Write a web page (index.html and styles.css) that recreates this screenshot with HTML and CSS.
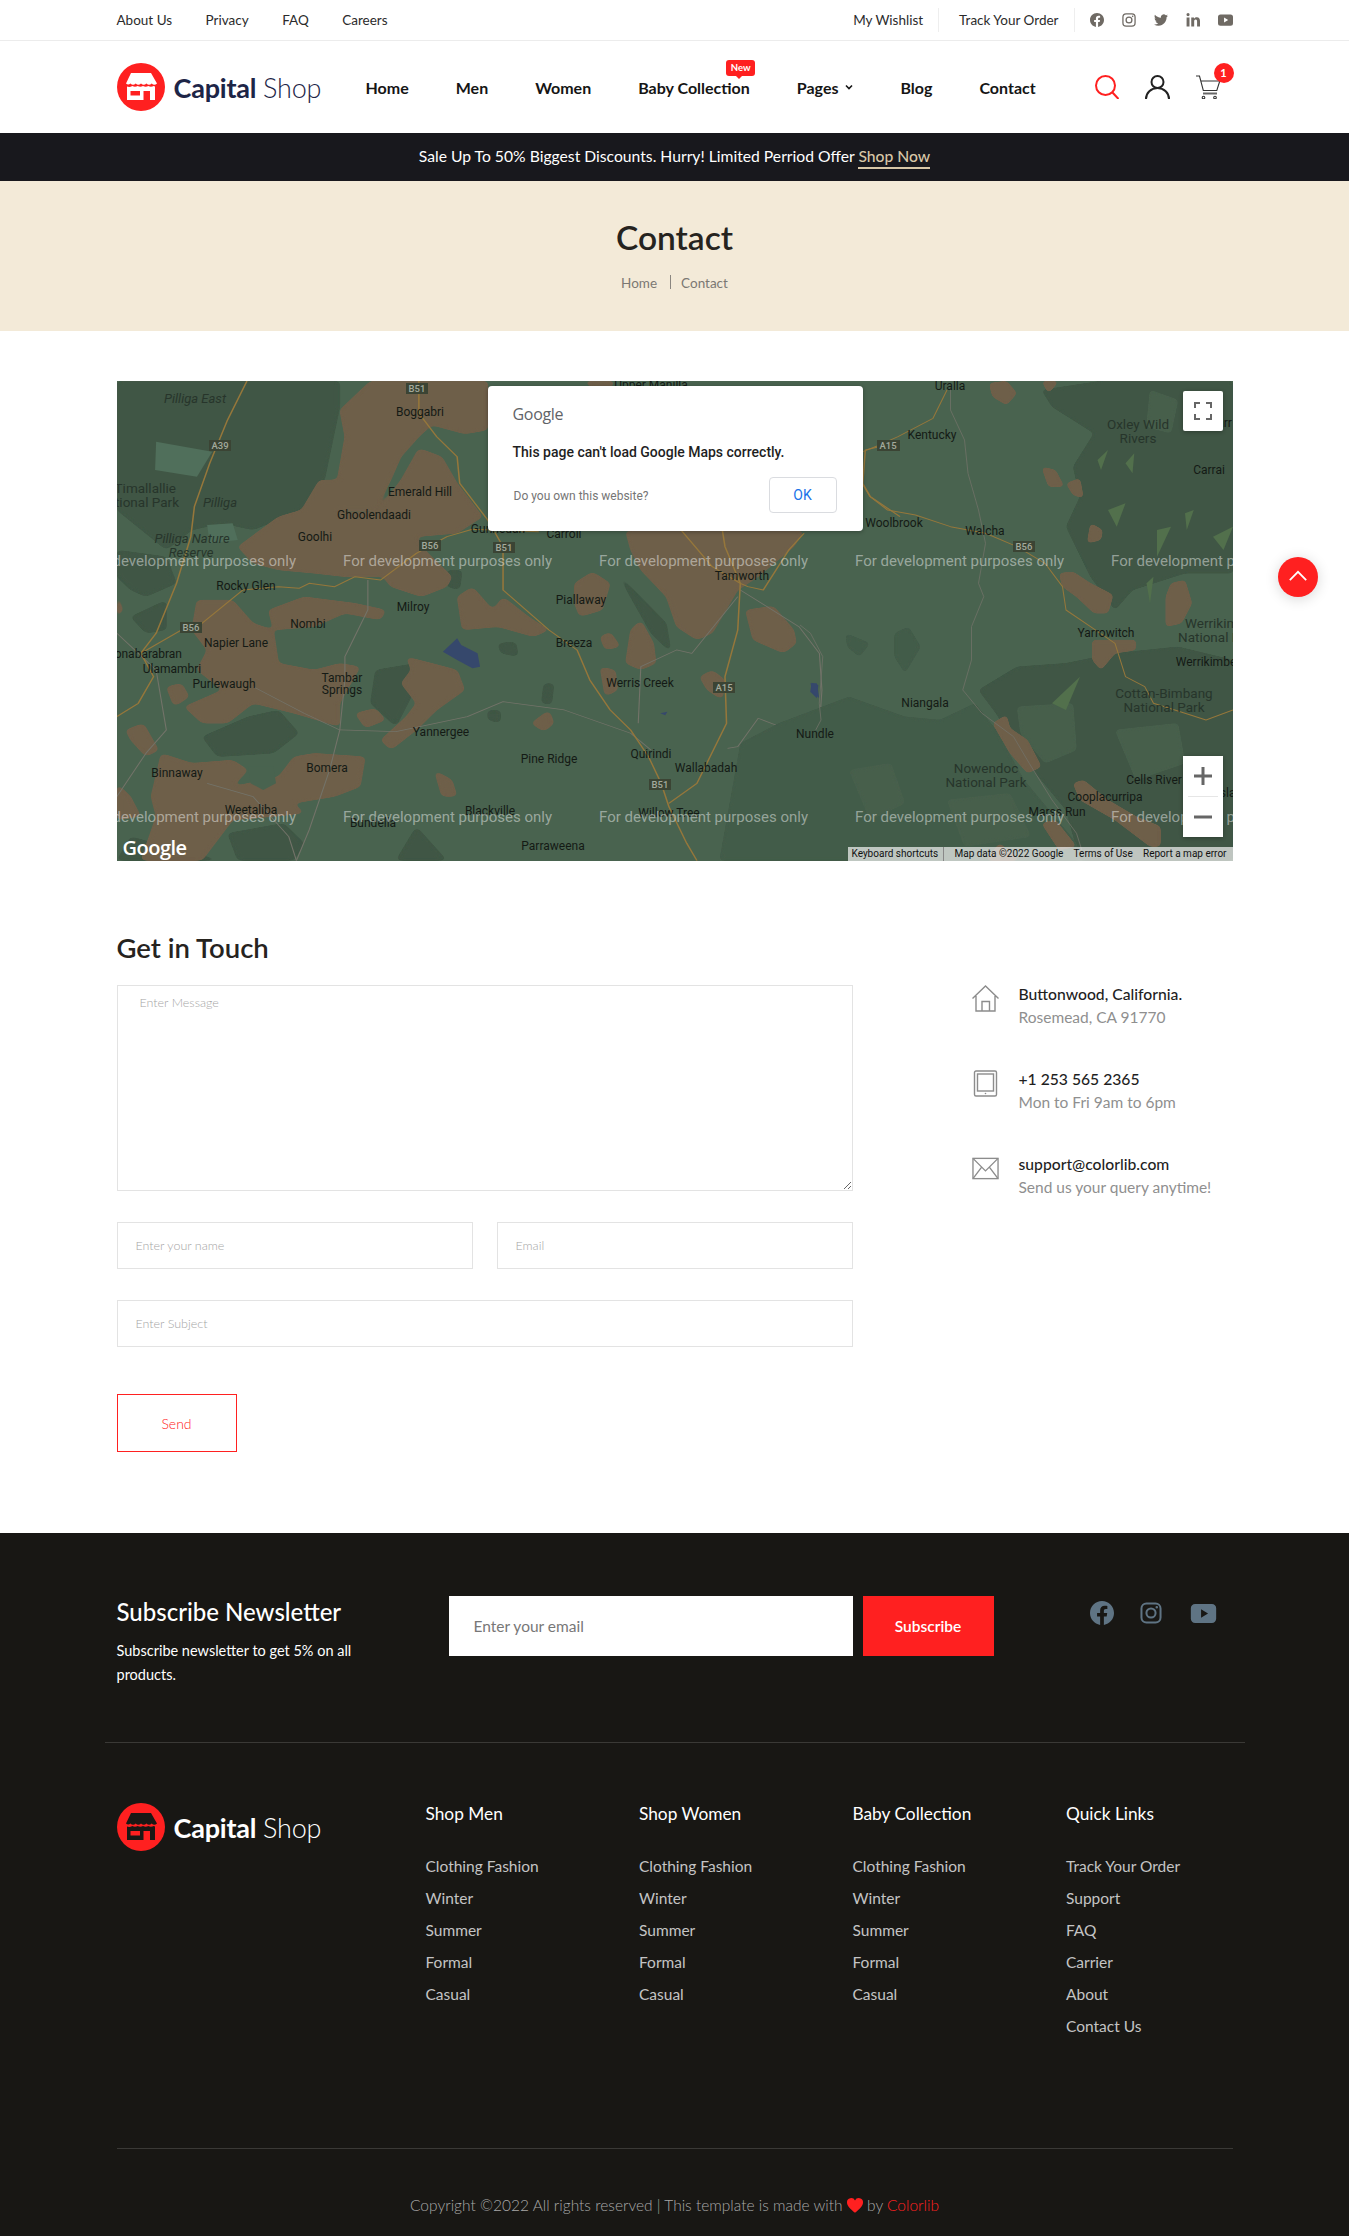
FILE: index.html
```html
<!DOCTYPE html>
<html lang="en">
<head>
<meta charset="utf-8">
<title>Contact - Capital Shop</title>
<link rel="stylesheet" href="styles.css">
</head>
<body>
<svg class="defs" width="0" height="0" aria-hidden="true">
  <symbol id="store" viewBox="0 0 48 48">
    <path class="store-disc" d="M24 0a24 24 0 1 1 0 48a24 24 0 1 1 0-48z"/>
    <path class="store-fg" d="M14 10h20l6 10.500q-2.700 2.500-5.300 0q-2.700 2.500-5.300 0q-2.700 2.500-5.400 0q-2.700 2.500-5.300 0q-2.700 2.500-5.300 0q-2.200 2-4.400 0z"/>
    <path class="store-fg" fill-rule="evenodd" d="M10 23.500q2.700 1 5.300-.5q2.700 1.500 5.400 0q2.600 1.500 5.300 0q2.700 1.500 5.300 0q2.700 1.500 5.400 0q.6.300 1.300.5V37H10zM13.500 28v4.500h9.500V28zM26.500 28v9H33v-9z"/>
  </symbol>
  <symbol id="fb" viewBox="0 0 24 24"><path d="M24 12.073c0-6.627-5.373-12-12-12s-12 5.373-12 12c0 5.990 4.388 10.954 10.125 11.854v-8.385H7.078v-3.470h3.047V9.430c0-3.007 1.792-4.669 4.533-4.669 1.312 0 2.686.235 2.686.235v2.953H15.830c-1.491 0-1.956.925-1.956 1.874v2.250h3.328l-.532 3.470h-2.796v8.385C19.612 23.027 24 18.062 24 12.073z"/></symbol>
  <symbol id="ig" viewBox="0 0 24 24"><path fill-rule="evenodd" d="M7 .5h10A6.500 6.500 0 0 1 23.500 7v10a6.500 6.500 0 0 1-6.500 6.500H7A6.500 6.500 0 0 1 .5 17V7A6.500 6.500 0 0 1 7 .5zm0 2.200A4.300 4.300 0 0 0 2.700 7v10A4.300 4.300 0 0 0 7 21.300h10a4.300 4.300 0 0 0 4.300-4.300V7A4.300 4.300 0 0 0 17 2.700zm5 3.200a6.100 6.100 0 1 1 0 12.200a6.100 6.100 0 0 1 0-12.200zm0 2.200a3.900 3.900 0 1 0 0 7.800a3.900 3.900 0 0 0 0-7.800zM18.300 4.300a1.400 1.400 0 1 1 0 2.800a1.400 1.400 0 0 1 0-2.800z"/></symbol>
  <symbol id="tw" viewBox="0 0 24 24"><path d="M23.953 4.570a10 10 0 0 1-2.825.775 4.958 4.958 0 0 0 2.163-2.723c-.951.555-2.005.959-3.127 1.184a4.920 4.920 0 0 0-8.384 4.482C7.690 8.095 4.067 6.130 1.640 3.162a4.822 4.822 0 0 0-.666 2.475c0 1.710.870 3.213 2.188 4.096a4.904 4.904 0 0 1-2.228-.616v.060a4.923 4.923 0 0 0 3.946 4.827 4.996 4.996 0 0 1-2.212.085 4.936 4.936 0 0 0 4.604 3.417 9.867 9.867 0 0 1-6.102 2.105c-.390 0-.779-.023-1.170-.067a13.995 13.995 0 0 0 7.557 2.209c9.053 0 13.998-7.496 13.998-13.985 0-.210 0-.420-.015-.630A9.935 9.935 0 0 0 24 4.590z"/></symbol>
  <symbol id="in" viewBox="0 0 24 24"><path d="M3.500 0a2.700 2.700 0 1 1 0 5.400a2.700 2.700 0 0 1 0-5.400zM1 7.500h5V23H1zM9 7.500h4.700v2.200c.8-1.400 2.400-2.600 4.700-2.600 4.500 0 5.600 3 5.600 6.900V23h-5v-8c0-1.900-.1-3.800-2.400-3.800s-2.600 1.800-2.600 3.700V23H9z"/></symbol>
  <symbol id="yt" viewBox="0 0 24 18"><path fill-rule="evenodd" d="M4 0h16a4 4 0 0 1 4 4v10a4 4 0 0 1-4 4H4a4 4 0 0 1-4-4V4a4 4 0 0 1 4-4zm5.700 5v8l6.600-4z"/></symbol>
</svg>

<header>
  <div class="topbar">
    <div class="wrap topbar-in">
      <nav class="top-links">
        <a>About Us</a><a>Privacy</a><a>FAQ</a><a>Careers</a>
      </nav>
      <div class="top-right">
        <a class="top-cell">My Wishlist</a>
        <a class="top-cell top-cell-b">Track Your Order</a>
        <div class="top-social">
          <svg class="si"><use href="#fb"/></svg>
          <svg class="si"><use href="#ig"/></svg>
          <svg class="si"><use href="#tw"/></svg>
          <svg class="si"><use href="#in"/></svg>
          <svg class="si si-yt"><use href="#yt"/></svg>
        </div>
      </div>
    </div>
  </div>
  <div class="wrap mainbar">
    <a class="logo logo-light">
      <svg class="logo-mark"><use href="#store"/></svg>
      <span class="logo-text"><b>Capital</b> <span>Shop</span></span>
    </a>
    <nav class="mainnav">
      <a>Home</a><a>Men</a><a>Women</a>
      <a class="has-badge">Baby Collection<span class="badge-new">New</span></a>
      <a class="pages">Pages
        <svg class="chev" viewBox="0 0 8 6"><path d="M1 1.500 4 4.500 7 1.500"/></svg>
      </a>
      <a>Blog</a><a>Contact</a>
    </nav>
    <div class="actions">
      <svg class="act act-search" viewBox="0 0 24 24"><circle cx="10.500" cy="10.500" r="9.500"/><path d="M17.500 17.500 23.500 24"/></svg>
      <svg class="act act-user" viewBox="0 0 25 24"><circle cx="12.500" cy="7" r="6"/><path d="M1 24c0-6 5-11 11.500-11S24 18 24 24"/></svg>
      <span class="cart">
        <svg class="act act-cart" viewBox="0 0 24 24"><path d="M0 1h3.500l3.800 14.500h13.500l3-9.500H5"/><path class="thick" d="M7 18.500h14"/><circle cx="7.500" cy="22.500" r="1.300"/><circle cx="19" cy="22.500" r="1.300"/></svg>
        <span class="cart-count">1</span>
      </span>
    </div>
  </div>
</header>

<div class="promo">Sale Up To 50% Biggest Discounts. Hurry! Limited Perriod Offer <a>Shop Now</a></div>

<section class="hero">
  <h1>Contact</h1>
  <div class="crumbs"><a>Home</a><i></i><a>Contact</a></div>
</section>

<main class="wrap">
  <section class="map">
    <svg class="map-art" viewBox="117 381 1116 480" width="1116" height="480">
      <defs>
        <filter id="soft" x="-3%" y="-3%" width="106%" height="106%">
          <feGaussianBlur stdDeviation="6"/>
          <feComponentTransfer><feFuncA type="linear" slope="10" intercept="-4"/></feComponentTransfer>
        </filter>
      </defs>
      <rect x="117" y="381" width="1116" height="480" class="m-base"/>

      <g transform="translate(100 370) scale(.5102 .3333)">
        <g class="m-forest" filter="url(#soft)">
          <polygon points="33,33 288,33 470,33 470,110 440,330 395,420 300,480 240,460 180,480 130,540 33,420"/>
          <polygon points="33,540 130,560 150,640 90,680 60,660 33,620"/>
          <polygon points="60,740 130,690 130,780 90,790"/>
          <polygon points="540,900 620,880 620,950 580,1070 530,1000"/>
          <polygon points="200,1100 290,1040 350,1020 390,1090 340,1150 230,1160"/>
          <polygon points="33,1472 60,1400 130,1430 240,1472"/>
          <polygon points="250,1390 360,1360 400,1420 380,1472 270,1472"/>
          <polygon points="580,1472 620,1370 680,1472"/>
          <polygon points="390,430 440,410 465,335 470,440 420,470 395,470"/>
          <polygon points="780,820 815,815 820,860 785,850"/>
          <polygon points="870,940 890,940 885,1005 865,1000"/>
          <polygon points="680,600 710,600 705,660 680,650"/>
          <polygon points="1010,600 1040,650 1110,760 1120,850 1080,790"/>
          <polygon points="360,925 395,930 395,955 362,950"/>
          <polygon points="760,1020 785,1020 785,1060 760,1050"/>
        </g>
        <polygon class="m-light" points="110,215 220,245 190,320 108,300"/>
        <polygon class="m-light" points="210,465 260,460 270,510 215,520"/>
        <g class="m-brown" filter="url(#soft)">
          <polygon points="470,120 530,33 760,33 760,180 715,192 650,165 625,200 590,260 570,330 540,420 470,420 465,330 480,200"/>
          <polygon points="590,330 625,235 670,260 700,340 750,440 700,490 620,500 640,545 690,620 680,650 630,680 570,650 555,620 480,620 420,610 350,600 300,580 270,530 350,440 395,420 430,330 470,330 470,430 540,430"/>
          <polygon points="190,690 260,690 300,760 340,780 350,880 420,900 470,880 510,890 470,1000 470,1070 380,1030 300,1000 250,1060 200,1060 165,1010 240,960 190,900 210,840 180,780"/>
          <polygon points="330,720 400,680 500,700 560,720 550,750 480,730 420,770 340,780"/>
          <polygon points="700,680 730,650 770,720 790,680 840,740 880,780 850,800 780,770 710,780"/>
          <polygon points="600,860 650,880 700,900 715,960 660,1020 620,1080 570,1140 550,1110 600,1040 620,1000 590,940 610,900"/>
          <polygon points="500,1030 540,1015 560,1050 520,1075"/>
          <polygon points="845,1060 880,1020 890,1060 870,1085"/>
          <polygon points="930,640 965,605 1000,640 985,720 940,740 930,700"/>
          <polygon points="1040,780 1060,750 1085,820 1090,880 1060,900 1030,880"/>
          <polygon points="980,800 1000,785 1020,830 990,840"/>
          <polygon points="980,890 1010,900 1015,960 990,980"/>
          <polygon points="1175,920 1200,900 1225,930 1220,990 1190,960"/>
          <polygon points="1265,720 1320,708 1360,780 1365,820 1340,850 1280,810"/>
          <polygon points="1030,482 1380,482 1360,530 1290,620 1250,660 1200,790 1170,810 1130,770 1110,680 1060,600 1040,540"/>
          <polygon points="950,33 1010,33 1000,55 960,50"/>
          <polygon points="130,950 160,940 175,980 145,1010"/>
          <polygon points="120,1150 180,1180 260,1170 290,1200 260,1250 350,1220 380,1160 420,1150 520,1160 510,1250 460,1280 380,1300 400,1330 340,1340 260,1350 200,1472 80,1472 110,1340 100,1280"/>
          <polygon points="50,1080 85,1060 115,1140 90,1160 60,1110"/>
          <polygon points="33,1240 60,1280 80,1340 33,1350"/>
          <polygon points="655,1200 690,1230 700,1280 670,1280"/>
          <polygon points="33,650 45,720 33,750"/>
        </g>
        <polygon class="m-base" points="290,1190 340,1190 345,1240 320,1260 295,1240"/>
        <g class="m-water">
          <polygon points="700,805 708,825 740,850 745,890 730,895 700,870 672,845"/>
          <polygon points="1395,938 1408,945 1405,985 1392,965"/>
          <polygon points="1098,1030 1112,1025 1108,1036"/>
        </g>
        <g class="m-road-minor">
          <polyline points="33,790 110,900 130,1080 90,1150 33,1280"/>
          <polyline points="525,630 525,720 480,860 480,930 470,1080 450,1200 410,1380 385,1472"/>
          <polyline points="300,950 400,1030 470,1080 580,1085 720,1040 790,995 910,1020 1040,1090 1080,1140"/>
          <polyline points="1255,660 1370,770 1410,850 1415,960 1410,1070 1380,1090 1350,1080 1290,1045 1250,1130 1230,1135"/>
          <polyline points="1250,680 1160,850 1130,840 1060,890 1055,1060"/>
          <polyline points="210,1240 300,1280 370,1400 385,1472"/>
        </g>
        <g class="m-road">
          <polyline points="288,33 250,150 215,280 185,410 178,500 150,640 110,790 80,850 105,920 75,1000 33,1040"/>
          <polyline points="625,33 625,130 660,200 700,260 705,340 760,450 790,530 790,660 880,780 935,840 960,930 1000,1020 1040,1080 1075,1160 1100,1240 1115,1310 1150,1420 1170,1472"/>
          <polyline points="80,850 160,780 200,760 280,660 350,650 390,655 410,640 460,650 500,620 550,630 620,550 680,500 730,478 860,485"/>
          <polyline points="1568,215 1500,240 1495,340 1510,380 1568,440"/>
          <polyline points="1220,482 1225,530 1255,640 1250,780 1225,920 1228,1060 1170,1240 1115,1300"/>
          <polyline points="1380,490 1350,540 1300,660 1270,650 1255,640"/>
          <polyline points="1140,482 1200,590 1255,640"/>
        </g>
      </g>

      <g transform="translate(800 370) scale(.35 .3333)">
        <g class="m-forest" filter="url(#soft)">
          <polygon points="690,60 860,33 1237,33 1237,610 1100,610 950,660 900,720 830,620 760,470 800,380 780,290 840,190 720,110"/>
          <polygon points="510,960 620,890 760,880 900,850 1080,830 1237,870 1237,1472 800,1472 760,1320 650,1180 560,1030"/>
        </g>
        <g class="m-forest-soft" filter="url(#soft)">
          <polygon points="-170,1120 -60,1060 140,980 300,1040 400,1050 500,1000 560,1080 640,1230 790,1420 800,1472 -230,1472"/>
          <polygon points="270,790 310,770 345,830 300,910 270,860"/>
          <polygon points="130,790 200,820 170,860 135,830"/>
        </g>
        <g class="m-midtone" filter="url(#soft)">
          <polygon points="620,1010 780,1000 790,1140 700,1180 630,1090"/>
          <polygon points="900,1080 1080,1060 1100,1180 960,1230"/>
          <polygon points="140,1200 260,1180 300,1300 200,1350"/>
          <polygon points="420,1290 600,1270 660,1400 470,1430"/>
          <polygon points="1000,60 1080,90 1060,190 990,170"/>
        </g>
        <g class="m-fleck">
          <polygon points="880,420 930,400 905,470"/>
          <polygon points="1020,480 1060,470 1020,560"/>
          <polygon points="930,280 955,250 950,310"/>
          <polygon points="1180,500 1237,470 1210,540"/>
          <polygon points="990,640 1010,620 1000,700"/>
          <polygon points="720,1000 800,920 760,1020"/>
          <polygon points="1100,430 1125,420 1105,480"/>
          <polygon points="850,270 880,240 860,300"/>
        </g>
        <g class="m-brown" filter="url(#soft)">
          <polygon points="540,40 590,33 620,70 590,105 550,80"/>
          <polygon points="690,33 740,33 710,70"/>
          <polygon points="690,290 730,300 755,350 710,350"/>
          <polygon points="760,340 800,325 810,385 780,375"/>
          <polygon points="830,460 865,480 860,510 820,520"/>
          <polygon points="740,610 780,605 830,640 895,675 880,730 840,730 790,680 750,650"/>
          <polygon points="1045,680 1060,640 1100,630 1120,700 1090,760 1045,770"/>
          <polygon points="835,810 960,810 960,840 900,850 860,900 835,870"/>
          <polygon points="550,1060 590,1035 600,1075 650,1110 690,1190 650,1210 600,1150"/>
          <polygon points="780,1240 810,1230 880,1290 960,1340 1030,1370 1030,1430 1000,1430 900,1350 800,1290"/>
          <polygon points="690,1360 730,1350 790,1430 740,1440"/>
          <polygon points="530,1472 570,1420 630,1472"/>
        </g>
        <polygon class="m-water" points="30,940 48,940 55,985 35,965"/>
        <g class="m-road-minor">
          <polyline points="430,60 430,120 470,210 480,310 510,420 530,520 510,640 525,680 490,770 490,870 465,960 520,1030 610,1100 655,1180 720,1290 790,1390 805,1440"/>
          <polyline points="0,765 30,790 65,860 55,1000 60,1050 45,1080"/>
        </g>
        <g class="m-road">
          <polyline points="180,345 200,380 250,420 330,435 430,470 530,490 620,530 700,580 750,650 760,720 830,770 900,820 930,920 985,950 1010,1000 1100,1030 1160,1050 1237,1020"/>
          <polyline points="180,245 220,228 280,200 380,145 420,60"/>
        </g>
      </g>

      <g class="m-label">
        <text x="651" y="389">Upper Manilla</text>
        <text x="420" y="416">Boggabri</text>
        <text x="420" y="496">Emerald Hill</text>
        <text x="374" y="519">Ghoolendaadi</text>
        <text x="315" y="541">Goolhi</text>
        <text x="498" y="533">Gunnedah</text>
        <text x="564" y="538">Carroll</text>
        <text x="246" y="590">Rocky Glen</text>
        <text x="413" y="611">Milroy</text>
        <text x="308" y="628">Nombi</text>
        <text x="581" y="604">Piallaway</text>
        <text x="742" y="580">Tamworth</text>
        <text x="236" y="647">Napier Lane</text>
        <text class="m-end" x="182" y="658">Coonabarabran</text>
        <text x="172" y="673">Ulamambri</text>
        <text x="224" y="688">Purlewaugh</text>
        <text x="574" y="647">Breeza</text>
        <text x="342" y="682">Tambar</text>
        <text x="342" y="694">Springs</text>
        <text x="640" y="687">Werris Creek</text>
        <text x="441" y="736">Yannergee</text>
        <text x="549" y="763">Pine Ridge</text>
        <text x="651" y="758">Quirindi</text>
        <text x="706" y="772">Wallabadah</text>
        <text x="815" y="738">Nundle</text>
        <text x="177" y="777">Binnaway</text>
        <text x="327" y="772">Bomera</text>
        <text x="251" y="814">Weetaliba</text>
        <text x="490" y="815">Blackville</text>
        <text x="373" y="827">Bundella</text>
        <text x="669" y="817">Willow Tree</text>
        <text x="553" y="850">Parraweena</text>
        <text x="894" y="527">Woolbrook</text>
        <text x="950" y="390">Uralla</text>
        <text x="932" y="439">Kentucky</text>
        <text x="985" y="535">Walcha</text>
        <text x="1209" y="474">Carrai</text>
        <text x="1106" y="637">Yarrowitch</text>
        <text x="1206" y="666">Werrikimbe</text>
        <text x="925" y="707">Niangala</text>
        <text x="1154" y="784">Cells River</text>
        <text x="1105" y="801">Cooplacurripa</text>
        <text x="1057" y="816">Marss Run</text>
        <text x="1226" y="797">Isla</text>
        <text x="1226" y="427">Carr C</text>
      </g>
      <g class="m-park">
        <text class="m-it" x="195" y="403">Pilliga East</text>
        <text class="m-end" x="176" y="493">Timallallie</text>
        <text class="m-end" x="179" y="507">National Park</text>
        <text class="m-it" x="220" y="507">Pilliga</text>
        <text class="m-it" x="192" y="543">Pilliga Nature</text>
        <text class="m-it" x="191" y="557">Reserve</text>
        <text x="1138" y="429">Oxley Wild</text>
        <text x="1138" y="443">Rivers</text>
        <text class="m-start" x="1185" y="628">Werrikimbe</text>
        <text class="m-start" x="1178" y="642">National Park</text>
        <text x="1164" y="698">Cottan-Bimbang</text>
        <text x="1164" y="712">National Park</text>
        <text x="986" y="773">Nowendoc</text>
        <text x="986" y="787">National Park</text>
      </g>
      <g class="m-shields">
        <g><rect x="406" y="383" width="22" height="11"/><text x="417" y="392">B51</text></g>
        <g><rect x="209" y="440" width="22" height="11"/><text x="220" y="449">A39</text></g>
        <g><rect x="419" y="540" width="22" height="11"/><text x="430" y="549">B56</text></g>
        <g><rect x="493" y="542" width="22" height="11"/><text x="504" y="551">B51</text></g>
        <g><rect x="180" y="622" width="22" height="11"/><text x="191" y="631">B56</text></g>
        <g><rect x="713" y="682" width="22" height="11"/><text x="724" y="691">A15</text></g>
        <g><rect x="649" y="779" width="22" height="11"/><text x="660" y="788">B51</text></g>
        <g><rect x="877" y="440" width="23" height="11"/><text x="888" y="449">A15</text></g>
        <g><rect x="1013" y="541" width="22" height="11"/><text x="1024" y="550">B56</text></g>
      </g>
      <g class="m-watermark">
        <text x="87" y="566">For development purposes only</text>
        <text x="343" y="566">For development purposes only</text>
        <text x="599" y="566">For development purposes only</text>
        <text x="855" y="566">For development purposes only</text>
        <text x="1111" y="566">For development purposes only</text>
        <text x="87" y="822">For development purposes only</text>
        <text x="343" y="822">For development purposes only</text>
        <text x="599" y="822">For development purposes only</text>
        <text x="855" y="822">For development purposes only</text>
        <text x="1111" y="822">For development purposes only</text>
      </g>
    </svg>

    <span class="g-mark">Google</span>

    <div class="map-dialog">
      <div class="md-logo">Google</div>
      <p class="md-msg">This page can't load Google Maps correctly.</p>
      <div class="md-foot">
        <a>Do you own this website?</a>
        <button type="button" class="md-ok">OK</button>
      </div>
    </div>

    <button type="button" class="map-full" aria-label="Toggle fullscreen view">
      <svg viewBox="0 0 18 18"><path d="M0 6V0h6v2H2v4zM12 0h6v6h-2V2h-4zM0 12h2v4h4v2H0zM16 12h2v6h-6v-2h4z"/></svg>
    </button>
    <div class="map-zoom">
      <button type="button" aria-label="Zoom in"><svg viewBox="0 0 18 18"><path d="M7.500 0h3v7.500H18v3h-7.500V18h-3v-7.500H0v-3h7.500z"/></svg></button>
      <i></i>
      <button type="button" aria-label="Zoom out"><svg viewBox="0 0 18 18"><path d="M0 7.500h18v3H0z"/></svg></button>
    </div>
    <div class="map-attr">
      <a class="ma-keys">Keyboard shortcuts</a>
      <a>Map data ©2022 Google</a>
      <a>Terms of Use</a>
      <a>Report a map error</a>
    </div>
  </section>

  <section class="contact">
    <div class="contact-form">
      <h2>Get in Touch</h2>
      <form class="form">
        <textarea class="f-msg" placeholder="Enter Message"></textarea>
        <div class="f-row">
          <input type="text" placeholder="Enter your name">
          <input type="email" placeholder="Email">
        </div>
        <input type="text" placeholder="Enter Subject">
        <button type="button" class="send">Send</button>
      </form>
    </div>
    <ul class="info">
      <li>
        <svg class="info-ico" viewBox="0 0 27 27"><path d="M.5 13.500 13.500 1 26.500 13.500M4 11v15h19V11M10 26V16.500h7.500V26"/></svg>
        <div><h3>Buttonwood, California.</h3><p>Rosemead, CA 91770</p></div>
      </li>
      <li>
        <svg class="info-ico" viewBox="0 0 27 27"><rect x="2.500" y="1" width="22" height="25" rx="1.500"/><rect x="5.500" y="4" width="16" height="17"/><circle class="dot" cx="13.500" cy="23.500" r=".8"/></svg>
        <div><h3>+1 253 565 2365</h3><p>Mon to Fri 9am to 6pm</p></div>
      </li>
      <li>
        <svg class="info-ico info-mail" viewBox="0 0 28 23"><rect x="1" y="1" width="26" height="21"/><path d="M1 1 14 14 27 1M1 22 10 10M27 22 18 10"/></svg>
        <div><h3>support@colorlib.com</h3><p>Send us your query anytime!</p></div>
      </li>
    </ul>
  </section>
</main>

<footer class="footer">
  <div class="f-wide">
    <div class="news">
      <div class="news-copy">
        <h4>Subscribe Newsletter</h4>
        <p>Subscribe newsletter to get 5% on all products.</p>
      </div>
      <form class="news-form">
        <input type="email" placeholder="Enter your email">
        <button type="button">Subscribe</button>
      </form>
      <div class="news-social">
        <svg class="ns-fb"><use href="#fb"/></svg>
        <svg class="ns-ig"><use href="#ig"/></svg>
        <svg class="ns-yt"><use href="#yt"/></svg>
      </div>
    </div>
  </div>
  <div class="f-wide f-rule">
    <div class="cols">
      <a class="logo logo-dark">
        <svg class="logo-mark"><use href="#store"/></svg>
        <span class="logo-text"><b>Capital</b> <span>Shop</span></span>
      </a>
      <div class="col">
        <h5>Shop Men</h5>
        <a>Clothing Fashion</a><a>Winter</a><a>Summer</a><a>Formal</a><a>Casual</a>
      </div>
      <div class="col">
        <h5>Shop Women</h5>
        <a>Clothing Fashion</a><a>Winter</a><a>Summer</a><a>Formal</a><a>Casual</a>
      </div>
      <div class="col">
        <h5>Baby Collection</h5>
        <a>Clothing Fashion</a><a>Winter</a><a>Summer</a><a>Formal</a><a>Casual</a>
      </div>
      <div class="col">
        <h5>Quick Links</h5>
        <a>Track Your Order</a><a>Support</a><a>FAQ</a><a>Carrier</a><a>About</a><a>Contact Us</a>
      </div>
    </div>
  </div>
  <div class="wrap copy">Copyright ©2022 All rights reserved | This template is made with <svg class="heart" viewBox="0 0 24 22"><path d="M12 22C5 16 0 12 0 6.500A6.300 6.300 0 0 1 12 3.500a6.300 6.300 0 0 1 12 3c0 5.500-5 9.500-12 15.500z"/></svg> by <a>Colorlib</a></div>
</footer>

<button type="button" class="to-top" aria-label="Back to top">
  <svg viewBox="0 0 22 14"><path d="M2 12 11 3 20 12"/></svg>
</button>
</body>
</html>
```
FILE: styles.css
```css
* { box-sizing: border-box; }
html, body { margin: 0; padding: 0; }
body {
  position: relative;
  font-family: "Lato", "Open Sans", sans-serif;
  color: #1c1c1c;
  background: #fff;
  font-size: 15px;
}
a { color: inherit; text-decoration: none; }
h1, h2, h3, h4, h5, p, ul { margin: 0; padding: 0; }
ul { list-style: none; }
button, input, textarea { font-family: inherit; }
.defs { position: absolute; }
.wrap { width: 1116px; margin: 0 auto; }

/* top bar */
.topbar { height: 41px; border-bottom: 1px solid #ececec; }
.topbar-in { display: flex; justify-content: space-between; align-items: center; height: 40px; font-size: 13.500px; color: #2b2b2b; }
.top-links { display: flex; gap: 33.500px; }
.top-right { display: flex; align-items: center; height: 24px; }
.top-cell { padding-right: 15px; border-right: 1px solid #eee; line-height: 24px; }
.top-cell-b { padding-left: 20px; }
.top-social { display: flex; gap: 18px; align-items: center; margin-left: 15px; }
.si { width: 14px; height: 14px; fill: #6f6a64; display: block; }
.si-yt { width: 15px; height: 12px; }

/* main bar */
.mainbar { display: flex; align-items: center; height: 92px; }
.logo { display: flex; align-items: center; gap: 9px; width: 249px; flex: none; }
.logo-mark { width: 48px; height: 48px; display: block; }
.store-disc { fill: #ff2020; }
.store-fg { fill: var(--store-fg, #1a1815); }
.logo-light { --store-fg: #fff; }
.logo-text { font-size: 27px; color: #1d2547; white-space: nowrap; letter-spacing: -.2px; }
.logo-text b { font-weight: 700; }
.logo-text span { font-weight: 300; }
.mainnav { display: flex; align-items: center; gap: 47px; font-size: 16px; font-weight: 700; color: #151515; }
.has-badge { position: relative; }
.badge-new {
  position: absolute; left: 88px; top: -18px;
  width: 29px; height: 16px; line-height: 16px; border-radius: 3px;
  background: #ff2020; color: #fff; font-size: 9.500px; font-weight: 700; text-align: center;
}
.badge-new::after {
  content: ""; position: absolute; left: 9px; top: 15px;
  border: 4px solid transparent; border-top-color: #ff2020; border-bottom: 0;
}
.pages { display: flex; align-items: center; gap: 7px; }
.chev { width: 8px; height: 6px; fill: none; stroke: #151515; stroke-width: 1.600; }
.actions { display: flex; align-items: center; gap: 26px; margin-left: auto; margin-right: 13px; height: 24px; }
.act { width: 24px; height: 24px; display: block; fill: none; stroke-width: 1.700; }
.act-search { stroke: #ff2020; stroke-width: 2; overflow: hidden; }
.act-user { width: 25px; stroke: #222; stroke-width: 2; }
.act-cart { stroke: #333; stroke-width: 1.100; }
.act-cart .thick { stroke: #666; stroke-width: 2; }
.cart { position: relative; display: block; width: 24px; height: 24px; }
.cart-count {
  position: absolute; left: 18px; top: -12px;
  width: 20px; height: 20px; border-radius: 50%;
  background: #ff2020; color: #fff; font-size: 11px; font-weight: 700;
  line-height: 20px; text-align: center;
}

/* promo */
.promo { height: 48px; background: #18181d; color: #fff; font-size: 15.700px; text-align: center; line-height: 47px; }
.promo a { display: inline-block; color: #d8c7a7; line-height: 20px; border-bottom: 2px solid #d8c7a7; padding-bottom: 1px; font-weight: 500; }

/* hero */
.hero { height: 150px; background: #f3ead8; text-align: center; padding-top: 33px; }
.hero h1 { font-size: 33.500px; line-height: 46px; font-weight: 600; color: #26231e; }
.crumbs { display: flex; justify-content: center; align-items: center; margin-top: 12px; font-size: 13.500px; line-height: 22px; color: #7b7873; }
.crumbs i { display: block; width: 1px; height: 14px; margin: -3px 10px 0 13px; background: #8a8680; }

/* map */
.map { position: relative; height: 480px; margin-top: 50px; overflow: hidden; background: #49634f; font-family: Roboto, sans-serif; }
.map-art { display: block; }
.m-base { fill: #49634f; }
.m-forest polygon { fill: #3f5745; }
.m-forest-soft polygon { fill: #435b49; }
.m-midtone polygon { fill: #465f4c; }
.m-light { fill: #506f5b; }
.m-fleck polygon { fill: #52704c; }
.m-brown polygon { fill: #6e5f48; }
.m-water polygon, .m-water { fill: #36486c; }
.m-road polyline { fill: none; stroke: #96773b; stroke-width: 3; stroke-linejoin: round; }
.m-road-minor polyline { fill: none; stroke: #737369; stroke-width: 2.200; stroke-linejoin: round; }
.m-label text { font-size: 12px; fill: #141a15; text-anchor: middle; }
.m-park text { font-size: 13.500px; fill: #27352b; text-anchor: middle; }
.m-park .m-it { font-style: italic; font-size: 13px; }
.m-park .m-end, .m-label .m-end { text-anchor: end; }
.m-park .m-start { text-anchor: start; }
.m-shields rect { fill: #3b4434; }
.m-shields text { font-size: 9.500px; fill: #a3aa9c; text-anchor: middle; font-weight: 500; }
.m-watermark text { font-size: 15px; fill: rgba(255, 255, 255, .45); }
.g-mark { position: absolute; left: 6px; top: 456px; color: #fff; font: 600 20px/22px "Open Sans", sans-serif; letter-spacing: -.5px; }
.map-dialog {
  position: absolute; left: 371px; top: 5px; width: 375px; height: 145px;
  padding: 18px 26px 0 25px;
  background: #fff; border-radius: 4px; box-shadow: 0 1px 4px rgba(0, 0, 0, .3);
}
.md-logo { font: 400 16px/20px "Open Sans", sans-serif; color: #5f6368; letter-spacing: -.3px; }
.md-msg { margin-top: 19px; font-size: 14px; line-height: 18px; font-weight: 500; color: #1f1f1f; }
.md-foot { display: flex; justify-content: space-between; align-items: center; margin-top: 16px; font-size: 12px; color: #757575; }
.md-foot a { padding-left: 1px; padding-top: 2px; }
.md-ok { width: 68px; height: 36px; background: #fff; border: 1px solid #dadce0; border-radius: 4px; color: #1a73e8; font: 400 14px Roboto, sans-serif; padding: 0; }
.map-full, .map-zoom button { display: flex; align-items: center; justify-content: center; border: 0; padding: 0; background: #fff; }
.map-full { position: absolute; left: 1066px; top: 10px; width: 40px; height: 40px; border-radius: 2px; box-shadow: 0 1px 4px rgba(0, 0, 0, .3); }
.map-full svg { width: 18px; height: 18px; fill: #666; }
.map-zoom { position: absolute; left: 1066px; top: 375px; width: 40px; height: 81px; background: #fff; border-radius: 2px; box-shadow: 0 1px 4px rgba(0, 0, 0, .3); }
.map-zoom button { width: 40px; height: 40px; }
.map-zoom svg { width: 18px; height: 18px; fill: #666; }
.map-zoom i { display: block; width: 30px; height: 1px; margin: 0 5px; background: #e6e6e6; }
.map-attr { position: absolute; right: 0; bottom: 0; height: 14px; width: 385px; display: flex; align-items: center; padding: 0 6px 0 4px; justify-content: space-between; background: rgba(245, 245, 245, .7); font-size: 10px; line-height: 14px; color: #111; white-space: nowrap; }
.ma-keys { position: relative; padding-right: 5px; border-right: 1px solid #888; }

/* contact */
.contact { display: flex; margin-top: 68px; padding-bottom: 81px; }
.contact-form { width: 736px; flex: none; }
.contact h2 { font-size: 27.500px; line-height: 37px; font-weight: 600; color: #26231e; margin-bottom: 19px; }
.form { display: flex; flex-direction: column; gap: 31px; }
.form input, .form textarea {
  display: block; width: 100%; border: 1px solid #e3e3e3; border-radius: 0; background: #fff;
  outline: 0; font-weight: 300; font-size: 12.500px;
}
.form input { height: 47px; padding: 0 18px; }
.form textarea { height: 206px; padding: 9px 22px; resize: both; }
.form ::placeholder { color: #a5a5a5; opacity: 1; }
.f-row { display: flex; gap: 24px; }
.f-row input { flex: 1; min-width: 0; }
.send { width: 120px; height: 58px; margin-top: 16px; background: #fff; border: 1px solid #ff2020; color: #ff2020; font-size: 14px; font-weight: 300; padding: 0; }
.info { margin-left: 119px; padding-top: 56px; }
.info li { display: flex; height: 85px; }
.info-ico { width: 27px; height: 27px; flex: none; fill: none; stroke: #8c8c8c; stroke-width: 1.400; margin-right: 20px; }
.info-ico .dot { fill: #8c8c8c; stroke: none; }
.info-mail { height: 23px; margin-top: 2px; }
.info h3 { font-size: 15.700px; line-height: 20px; font-weight: 500; color: #1f1f1f; margin-top: -1px; }
.info p { margin-top: 3px; font-size: 15.500px; line-height: 20px; color: #8f8f8f; white-space: nowrap; }

/* footer */
.footer { background: #181714; color: #fff; height: 703px; padding-top: 63px; }
.f-wide { width: 1140px; padding: 0 12px; margin-left: 104.500px; }
.news { display: flex; height: 146px; }
.news-copy { width: 332px; flex: none; }
.news-copy h4 { font-size: 24px; line-height: 32px; font-weight: 500; }
.news-copy p { width: 240px; margin-top: 11px; font-size: 14.500px; line-height: 24px; }
.news-form { display: flex; gap: 10px; height: 60px; }
.news-form input { width: 404px; height: 60px; border: 0; border-radius: 0; padding: 0 25px; font-size: 15.500px; outline: 0; background: #fff; }
.news-form ::placeholder { color: #777; opacity: 1; }
.news-form button { width: 131px; height: 60px; border: 0; background: #ff2020; color: #fff; font-size: 15.500px; font-weight: 600; padding: 0; }
.news-social { display: flex; align-items: flex-start; gap: 26px; margin-left: 96px; padding-top: 5px; }
.news-social svg { fill: #5f7484; display: block; }
.ns-fb { width: 24px; height: 24px; }
.ns-ig { width: 22px; height: 22px; margin-top: 1px; }
.ns-yt { width: 27px; height: 19px; margin-top: 3px; margin-left: 2px; }
.f-rule { border-top: 1px solid #3a3936; }
.cols { display: flex; padding-top: 60px; height: 405px; }
.logo-dark { width: 309px; align-self: flex-start; }
.logo-dark .logo-text { color: #fff; }
.col { width: 213.500px; flex: none; display: flex; flex-direction: column; }
.col h5 { font-size: 17.300px; line-height: 24px; font-weight: 400; color: #fff; margin: -1px 0 24px; }
.col a { font-size: 15.500px; line-height: 32px; color: #c4c4c4; }
.copy { margin-top: 0; padding-top: 44px; border-top: 1px solid #3a3936; font-size: 15.500px; line-height: 24px; font-weight: 300; color: #a8a8a8; text-align: center; white-space: nowrap; }
.copy a { color: #ff2020; }
.heart { display: inline-block; width: 16px; height: 15px; fill: #ff2020; vertical-align: -2px; }
.to-top {
  position: absolute; left: 1278px; top: 557px; width: 40px; height: 40px; padding: 0;
  border: 0; border-radius: 50%; background: #ff2020; box-shadow: 0 2px 14px rgba(0, 0, 0, .16);
  display: flex; align-items: center; justify-content: center;
}
.to-top svg { width: 20px; height: 13px; fill: none; stroke: #fff; stroke-width: 2; margin-top: -4px; }
```
